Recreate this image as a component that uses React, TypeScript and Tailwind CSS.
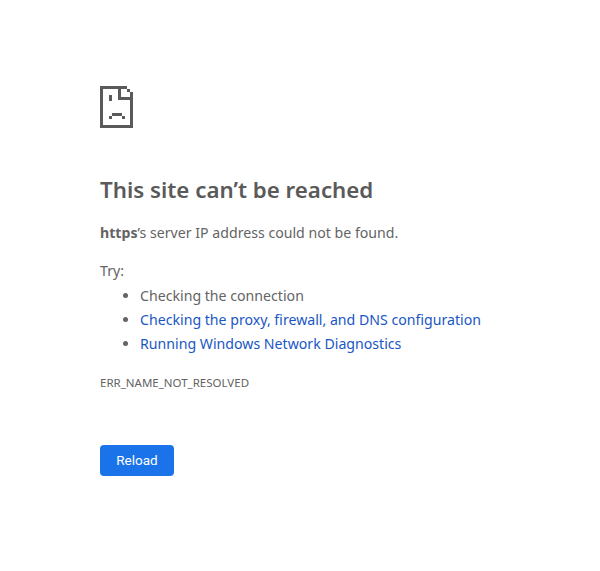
import { useState } from "react";

function SadPage() {
  return (
    <svg width="33" height="42" viewBox="0 0 33 42" fill="#5a5a5a" shapeRendering="crispEdges">
      <path d="M0 0h27v3H3v36h27V6h3v36H0z" />
      <path d="M18 3h3v8h9v3H18z" />
      <path d="M27 3h3v3h-3z" />
      <path d="M9 9h3v6H9z" />
      <path d="M12 27h10v3H12zM9 30h3v3H9zM22 30h3v3h-3z" />
    </svg>
  );
}

export default function App() {
  const [reloads, setReloads] = useState(0);

  return (
    <div
      className="min-h-screen bg-white text-[#646464] pl-[100px] pt-[86px] font-['Noto_Sans',sans-serif]"
      data-reloads={reloads}
    >
      <SadPage />

      <h1 className="mt-[45px] text-[22.3px] leading-[34px] font-semibold text-[#5a5a5a]">
        This site can’t be reached
      </h1>

      <p className="mt-[16px] text-[14.15px] leading-[20px]">
        <strong className="font-bold">https</strong>’s server IP address could not be found.
      </p>

      <p className="mt-[18px] text-[14.15px] leading-[20px]">Try:</p>
      <ul className="mt-[3px] pl-[40px] list-disc text-[14.15px]">
        <li className="h-[24px] leading-[24px]">Checking the connection</li>
        <li className="h-[24px] leading-[24px]">
          <a href="#" className="text-[#1a56c4]">
            Checking the proxy, firewall, and DNS configuration
          </a>
        </li>
        <li className="h-[24px] leading-[24px]">
          <a href="#" className="text-[#1a56c4]">
            Running Windows Network Diagnostics
          </a>
        </li>
      </ul>

      <div className="mt-[19px] text-[11.5px] leading-[16px] uppercase">ERR_NAME_NOT_RESOLVED</div>

      <button
        onClick={() => setReloads(reloads + 1)}
        className="mt-[54px] block w-[74px] h-[31px] rounded-[4px] bg-[#1a73e8] text-white text-[13.5px] font-normal font-['Roboto',sans-serif]"
      >
        Reload
      </button>
    </div>
  );
}
